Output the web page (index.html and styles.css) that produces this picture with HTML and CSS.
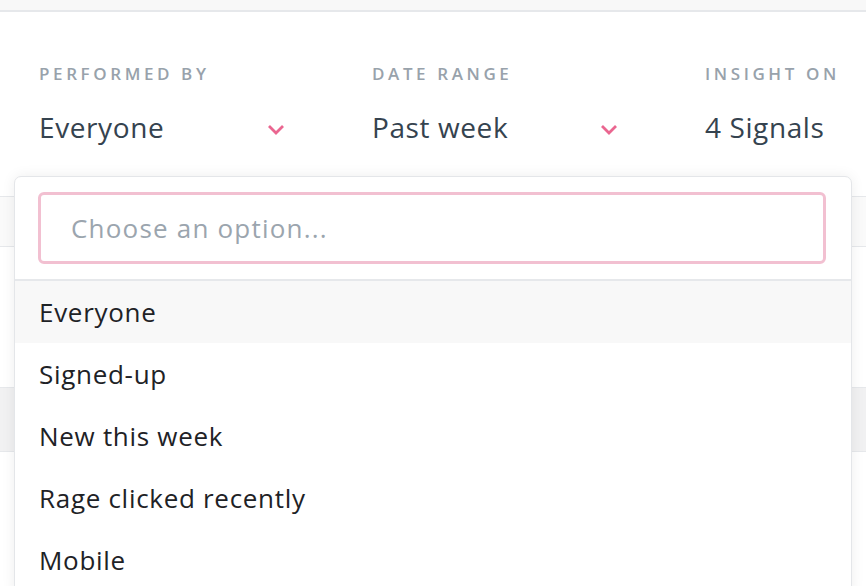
FILE: index.html
```html
<!DOCTYPE html>
<html lang="en">
<head>
    <meta charset="UTF-8">
    <meta name="viewport" content="width=device-width, initial-scale=1.0">
    <title>Insight filters</title>
    <link rel="stylesheet" href="styles.css">
</head>
<body>
    <div class="topbar"></div>

    <div class="page">
        <!-- Filter bar -->
        <div class="filters">
            <div class="filter">
                <div class="filter-label">Performed by</div>
                <div class="filter-value">
                    <span>Everyone</span>
                    <svg class="chevron" width="18" height="11" viewBox="0 0 18 11"><path d="M2 2l7 7 7-7" fill="none" stroke="#ea6690" stroke-width="2.8"/></svg>
                </div>
            </div>
            <div class="filter">
                <div class="filter-label">Date range</div>
                <div class="filter-value">
                    <span>Past week</span>
                    <svg class="chevron" width="18" height="11" viewBox="0 0 18 11"><path d="M2 2l7 7 7-7" fill="none" stroke="#ea6690" stroke-width="2.8"/></svg>
                </div>
            </div>
            <div class="filter filter-last">
                <div class="filter-label">Insight on</div>
                <div class="filter-value">
                    <span>4 Signals</span>
                </div>
            </div>
        </div>

        <!-- Table behind the dropdown -->
        <div class="table">
            <div class="row row-head"></div>
            <div class="row row-tall"></div>
            <div class="row row-grey"></div>
            <div class="row row-rest"></div>
        </div>

        <!-- Open dropdown -->
        <div class="dropdown">
            <div class="dropdown-search">
                <input type="text" placeholder="Choose an option...">
            </div>
            <ul class="options">
                <li class="active">Everyone</li>
                <li>Signed-up</li>
                <li>New this week</li>
                <li>Rage clicked recently</li>
                <li>Mobile</li>
            </ul>
        </div>
    </div>
</body>
</html>
```

FILE: styles.css
```css
body {
    font-family: 'Open Sans', 'Lato', sans-serif;
    background-color: #ffffff;
    margin: 0;
    padding: 0;
    overflow: hidden;
    height: 586px;
}
.topbar {
    height: 10px;
    background-color: #f8f8f8;
    border-bottom: 2px solid #e6e8eb;
}
.page {
    position: relative;
    height: 574px;
    overflow: hidden;
}
.filters {
    display: flex;
    padding: 50px 0 0 39px;
    height: 140px;
    box-sizing: border-box;
    overflow: hidden;
}
.filter {
    width: 333px;
    flex-shrink: 0;
}
.filter-last {
    width: auto;
    flex-shrink: 1;
}
.filter-label {
    color: #98a2ab;
    font-size: 17px;
    font-weight: 600;
    letter-spacing: 3.6px;
    text-transform: uppercase;
    line-height: 24px;
    white-space: nowrap;
}
.filter-value {
    display: flex;
    align-items: center;
    justify-content: space-between;
    width: 246px;
    margin-top: 21px;
    color: #35434f;
    font-size: 28px;
    letter-spacing: 0.6px;
    line-height: 40px;
    white-space: nowrap;
}
.filter-last .filter-value {
    width: auto;
}
.chevron {
    margin-top: 4px;
}
.table {
    margin-top: 44px;
}
.row {
    border-bottom: 1px solid #e6e8eb;
}
.row-head {
    height: 49px;
    border-top: 1px solid #e6e8eb;
    background-color: #fafafa;
}
.row-tall {
    height: 140px;
}
.row-grey {
    height: 63px;
    background-color: #f1f1f2;
}
.row-rest {
    height: 100px;
    border-bottom: none;
}
.dropdown {
    position: absolute;
    left: 14px;
    top: 164px;
    width: 838px;
    height: 420px;
    background-color: #ffffff;
    border: 1px solid #e4e6e9;
    border-radius: 7px;
    box-shadow: 0 0 14px rgba(0, 0, 0, 0.07);
    box-sizing: border-box;
}
.dropdown-search {
    padding: 15px 25px 15px 23px;
    border-bottom: 2px solid #e6e8eb;
}
.dropdown-search input {
    display: block;
    width: 100%;
    height: 72px;
    box-sizing: border-box;
    border: 3px solid #f2c0d1;
    border-radius: 6px;
    padding: 0 30px;
    font-family: inherit;
    font-size: 26px;
    letter-spacing: 1.2px;
    color: #35434f;
    outline: none;
}
.dropdown-search input::placeholder {
    color: #9ba5ae;
}
.options {
    list-style: none;
    margin: 0;
    padding: 0;
}
.options li {
    height: 62px;
    line-height: 62px;
    padding-left: 24px;
    font-size: 26px;
    letter-spacing: 0.7px;
    color: #1e2226;
}
.options li.active {
    background-color: #f8f8f8;
}
```
